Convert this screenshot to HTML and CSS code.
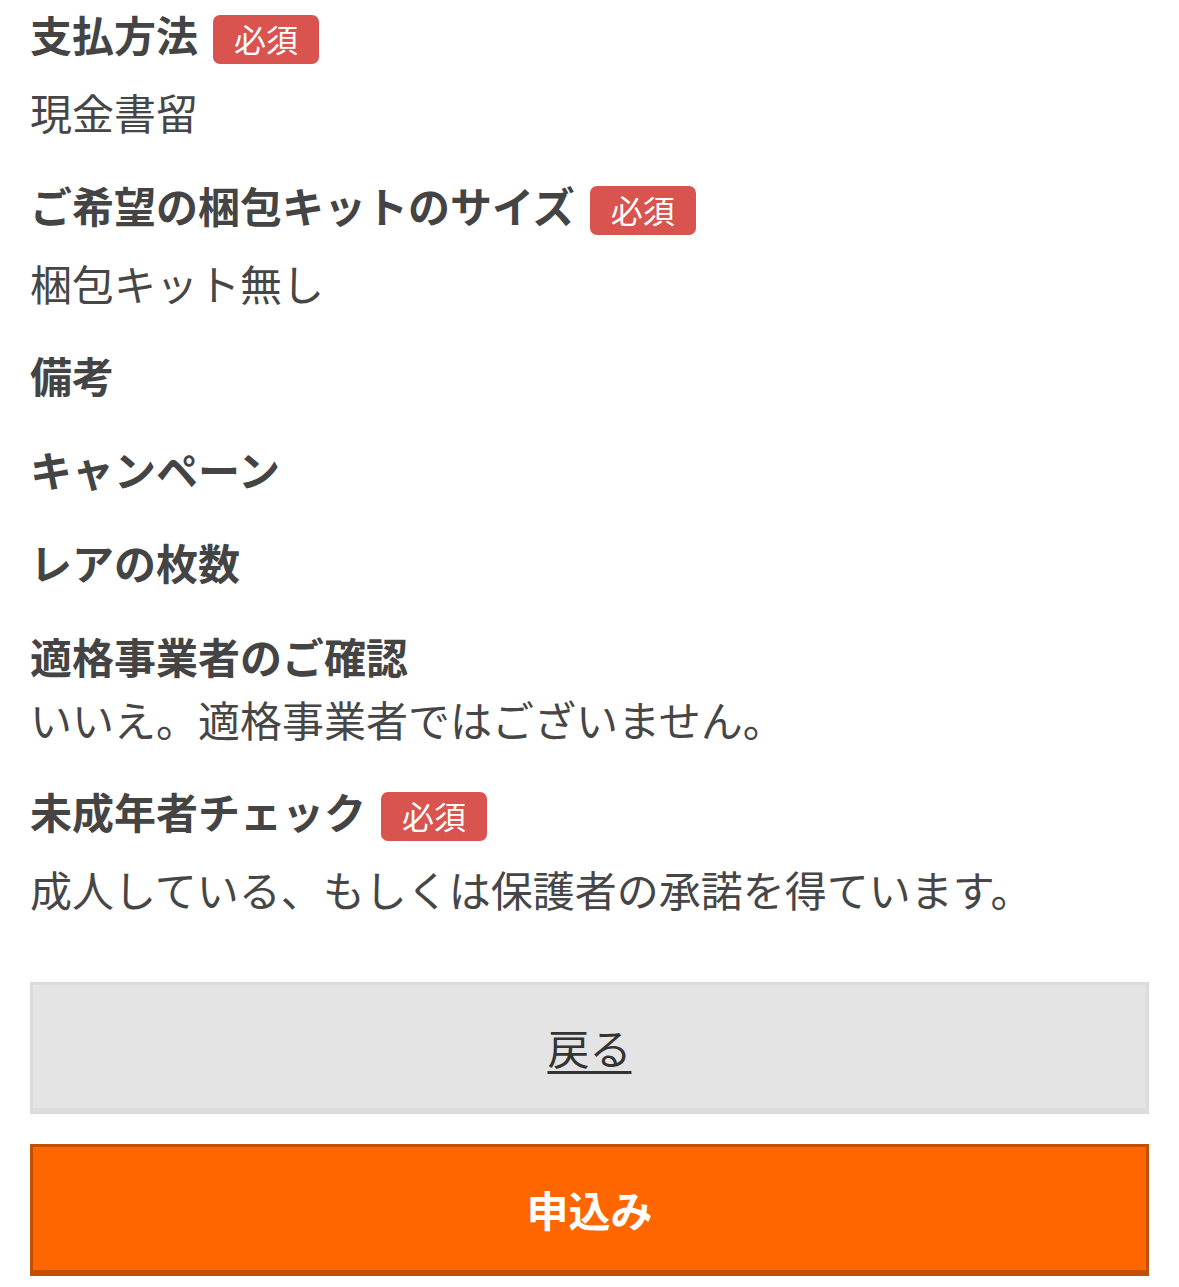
FILE: index.html
```html
<!DOCTYPE html>
<html lang="ja">
<head>
<meta charset="utf-8">
<title>確認</title>
<link rel="stylesheet" href="styles.css">
</head>
<body>
<main class="confirm">
  <dl class="fields">
    <div class="field">
      <dt class="label"><span class="label-text">支払方法</span><span class="badge">必須</span></dt>
      <dd class="value">現金書留</dd>
    </div>
    <div class="field">
      <dt class="label"><span class="label-text">ご希望の梱包キットのサイズ</span><span class="badge">必須</span></dt>
      <dd class="value">梱包キット無し</dd>
    </div>
    <div class="field">
      <dt class="label"><span class="label-text">備考</span></dt>
    </div>
    <div class="field">
      <dt class="label"><span class="label-text">キャンペーン</span></dt>
    </div>
    <div class="field">
      <dt class="label"><span class="label-text">レアの枚数</span></dt>
    </div>
    <div class="field">
      <dt class="label"><span class="label-text">適格事業者のご確認</span></dt>
      <dd class="value">いいえ。適格事業者ではございません。</dd>
    </div>
    <div class="field">
      <dt class="label"><span class="label-text">未成年者チェック</span><span class="badge">必須</span></dt>
      <dd class="value">成人している、もしくは保護者の承諾を得ています。</dd>
    </div>
  </dl>
  <div class="actions">
    <button type="button" class="btn btn-back"><span class="btn-link">戻る</span></button>
    <button type="submit" class="btn btn-submit">申込み</button>
  </div>
</main>
</body>
</html>
```
FILE: styles.css
```css
html, body {
  margin: 0;
  padding: 0;
  background: #ffffff;
}

body {
  font-family: "Noto Sans CJK JP", "Noto Sans", sans-serif;
  color: #444444;
}

.confirm {
  padding: 2px 30px 0;
}

.fields {
  margin: 0;
  padding: 0;
}

.field {
  margin-bottom: 29.5px;
}

.label {
  display: flex;
  align-items: flex-start;
  margin: 0;
}

.label-text {
  font-size: 42px;
  font-weight: 700;
  line-height: 64px;
  color: #444444;
  white-space: nowrap;
}

.badge {
  display: inline-flex;
  align-items: center;
  justify-content: center;
  height: 49px;
  padding: 0 21px 3px;
  margin: 13px 0 17px 15px;
  background: #d9534f;
  color: #ffffff;
  font-size: 32px;
  font-weight: 400;
  line-height: 1;
  border-radius: 7px;
  box-sizing: border-box;
}

.value {
  margin: 0;
  font-size: 42px;
  font-weight: 400;
  line-height: 62px;
  color: #464646;
}

.actions {
  display: flex;
  flex-direction: column;
  gap: 30px;
  margin-top: 62px;
}

.btn {
  display: flex;
  align-items: center;
  justify-content: center;
  width: 100%;
  height: 132px;
  margin: 0;
  padding: 0;
  border-style: solid;
  border-width: 3px 3px 6px 3px;
  border-radius: 0;
  box-sizing: border-box;
  font-family: "Noto Sans CJK JP", "Noto Sans", sans-serif;
  font-size: 42px;
  line-height: 1;
  cursor: pointer;
}

.btn-back {
  background: #e4e4e4;
  border-color: #dcdcdc;
  color: #333333;
  font-weight: 400;
}

.btn-link {
  text-decoration: underline;
  text-decoration-thickness: 3px;
  text-underline-offset: 6px;
}

.btn-submit {
  background: #ff6600;
  border-color: #c05006;
  color: #ffffff;
  font-weight: 700;
}
```
